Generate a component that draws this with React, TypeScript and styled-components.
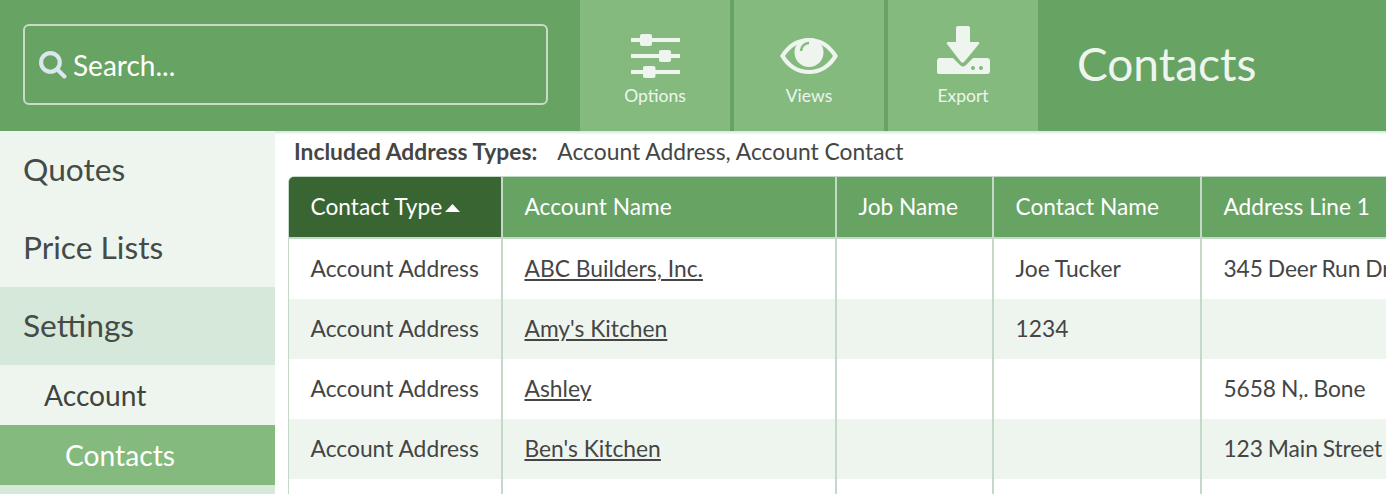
import React from "react";
import styled, { createGlobalStyle } from "styled-components";

const Global = createGlobalStyle`
  html, body { margin: 0; padding: 0; height: 100%; overflow: hidden; background: #fff; }
  body { font-family: Lato, "Liberation Sans", sans-serif; color: #3f3f3f; }
  * { box-sizing: border-box; }
`;

const Page = styled.div`
  width: 1386px;
  height: 494px;
  overflow: hidden;
  display: flex;
  flex-direction: column;
`;
const Header = styled.header`
  flex: 0 0 131px;
  height: 131px;
  background: #67a363;
  display: flex;
  align-items: stretch;
`;
const SearchWrap = styled.div`
  width: 580px;
  padding: 24px 32px 26px 23px;
`;
const SearchBox = styled.div`
  height: 81px;
  border: 2px solid #c6dcc4;
  border-radius: 6px;
  display: flex;
  align-items: center;
  padding-left: 13px;
  gap: 6px;
  color: #fff;
  font-size: 28px;
`;
const Tiles = styled.nav`
  display: flex;
  gap: 4px;
`;
const Tile = styled.div`
  width: 150px;
  background: #84ba7e;
  color: #eef5ee;
  font-size: 17.5px;
  display: flex;
  flex-direction: column;
  align-items: center;
  svg { display: block; margin-top: 25px; height: 54px; }
  span { margin-top: 6px; line-height: 22px; }
`;
const Title = styled.h1`
  margin: -2px 0 0 39px;
  font-weight: 400;
  font-size: 46px;
  line-height: 131px;
  color: #eef5ee;
`;
const Body = styled.div`
  flex: 1;
  display: flex;
  min-height: 0;
  box-shadow: inset 0 4px 3px -2px #d6e8da;
`;
const Side = styled.aside`
  flex: 0 0 275px;
  background: #eef5ef;
  display: flex;
  flex-direction: column;
`;
const SideItem = styled.div<{ $on?: boolean }>`
  height: 78px;
  line-height: 76px;
  padding-left: 23px;
  font-size: 31.7px;
  color: #454b47;
  background: ${(p) => (p.$on ? "#d6e8da" : "transparent")};
`;
const SubItem = styled.div<{ $active?: boolean; $depth: number }>`
  height: 60px;
  line-height: 60px;
  padding-left: ${(p) => p.$depth}px;
  font-size: 28.2px;
  color: ${(p) => (p.$active ? "#fff" : "#3f4441")};
  background: ${(p) => (p.$active ? "#84ba7e" : "transparent")};
`;
const SideRest = styled.div`
  flex: 1;
  background: #d6e8da;
`;
const Main = styled.main`
  flex: 1;
  min-width: 0;
  padding: 0 0 0 13px;
  overflow: hidden;
`;
const Filter = styled.div`
  height: 45px;
  line-height: 41px;
  padding-left: 6px;
  font-size: 22.8px;
  color: #454545;
  white-space: nowrap;
  b { font-weight: 700; margin-right: 20px; }
`;
const Table = styled.div`
  width: 1200px;
  border-top: 1px solid #c4d9c8;
  border-left: 1px solid #c4d9c8;
  border-top-left-radius: 6px;
  overflow: hidden;
`;
const Row = styled.div<{ $alt?: boolean }>`
  display: grid;
  grid-template-columns: 214px 334px 157px 208px 1fr;
  height: 60px;
  background: ${(p) => (p.$alt ? "#eef5ef" : "#fff")};
`;
const HeadRow = styled(Row)`
  background: #67a363;
  border-bottom: 2px solid #c4d9c8;
  height: 62px;
  color: #fff;
`;
const Cell = styled.div`
  border-right: 2px solid #c4d9c8;
  padding-left: 21.5px;
  font-size: 22.8px;
  line-height: 59px;
  color: #454545;
  white-space: nowrap;
  overflow: hidden;
  &:last-child { border-right: none; letter-spacing: -0.1px; word-spacing: -0.8px; }
  a { color: inherit; text-decoration: underline; }
`;
const HeadCell = styled(Cell)<{ $sorted?: boolean }>`
  color: #fff;
  font-size: 22.7px;
  background: ${(p) => (p.$sorted ? "#396532" : "transparent")};
  &:last-child { letter-spacing: 0; word-spacing: 0; }
  svg { margin-left: 3px; vertical-align: 3px; }
`;

const Search = () => (
  <svg width="29" height="29" viewBox="0 0 28 28" fill="none" stroke="#dbe7ef">
    <circle cx="12" cy="12" r="9" strokeWidth="4" />
    <path d="M19 19l6.5 6.5" strokeWidth="4" strokeLinecap="round" />
  </svg>
);
const Sliders = () => (
  <svg width="50" height="54" viewBox="0 0 50 54" fill="#eef5ee">
    <rect x="1" y="13" width="49" height="4" />
    <rect x="1" y="29" width="49" height="4" />
    <rect x="1" y="45" width="49" height="4" />
    <rect x="10" y="9" width="12" height="12" rx="2" />
    <rect x="29" y="25" width="12" height="12" rx="2" />
    <rect x="13" y="41" width="12.500" height="12" rx="2" />
  </svg>
);
const Eye = () => (
  <svg width="58" height="54" viewBox="0 0 58 54" fill="#eef5ee">
    <path fillRule="evenodd" d="M0 31C7 19 17 13 29 13s22 6 29 18c-7 12-17 18-29 18S7 43 0 31zm5 0c6 9 14 14 24 14s18-5 24-14c-6-9-14-14-24-14S11 22 5 31z" />
    <circle cx="29" cy="27.500" r="14.500" />
    <path d="M21 26a8 8 0 0 1 8-8" fill="none" stroke="#84ba7e" strokeWidth="2.500" />
  </svg>
);
const Download = () => (
  <svg width="54" height="54" viewBox="0 0 54 54" fill="#eef5ee">
    <path d="M22 1h10a2 2 0 0 1 2 2v14h8c1 0 2 1 1 2L28 37c-1 1-2 1-3 0L11 19c-1-1 0-2 1-2h8V3a2 2 0 0 1 2-2z" />
    <path fillRule="evenodd" d="M3 33h14l7 7c2 2 4 2 6 0l7-7h14a3 3 0 0 1 3 3v10a3 3 0 0 1-3 3H3a2.500 2.500 0 0 1-2-3V36a3 3 0 0 1 2-3zm36 10a2 2 0 1 0 0 .1zm8 0a2 2 0 1 0 0 .1z" />
  </svg>
);

const rows = [
  ["ABC Builders, Inc.", "Joe Tucker", "345 Deer Run Drive"],
  ["Amy's Kitchen", "1234", ""],
  ["Ashley", "", "5658 N,. Bone"],
  ["Ben's Kitchen", "", "123 Main Street"],
  ["", "", ""],
];

export default function App() {
  return (
    <Page>
      <Global />
      <Header>
        <SearchWrap>
          <SearchBox>
            <Search />
            <span>Search...</span>
          </SearchBox>
        </SearchWrap>
        <Tiles>
          <Tile><Sliders /><span>Options</span></Tile>
          <Tile><Eye /><span>Views</span></Tile>
          <Tile><Download /><span>Export</span></Tile>
        </Tiles>
        <Title>Contacts</Title>
      </Header>
      <Body>
        <Side>
          <SideItem>Quotes</SideItem>
          <SideItem>Price Lists</SideItem>
          <SideItem $on>Settings</SideItem>
          <SubItem $depth={44}>Account</SubItem>
          <SubItem $depth={65} $active>Contacts</SubItem>
          <SideRest />
        </Side>
        <Main>
          <Filter><b>Included Address Types:</b>Account Address, Account Contact</Filter>
          <Table>
            <HeadRow>
              <HeadCell $sorted>
                Contact Type
                <svg width="15" height="8" viewBox="0 0 15 8" fill="#fff"><path d="M7.500 0l7.500 8H0z" /></svg>
              </HeadCell>
              <HeadCell>Account Name</HeadCell>
              <HeadCell>Job Name</HeadCell>
              <HeadCell>Contact Name</HeadCell>
              <HeadCell>Address Line 1</HeadCell>
            </HeadRow>
            {rows.map((r, i) => (
              <Row key={i} $alt={i % 2 === 1}>
                <Cell>{r[0] ? "Account Address" : ""}</Cell>
                <Cell><a href="#">{r[0]}</a></Cell>
                <Cell />
                <Cell>{r[1]}</Cell>
                <Cell>{r[2]}</Cell>
              </Row>
            ))}
          </Table>
        </Main>
      </Body>
    </Page>
  );
}
